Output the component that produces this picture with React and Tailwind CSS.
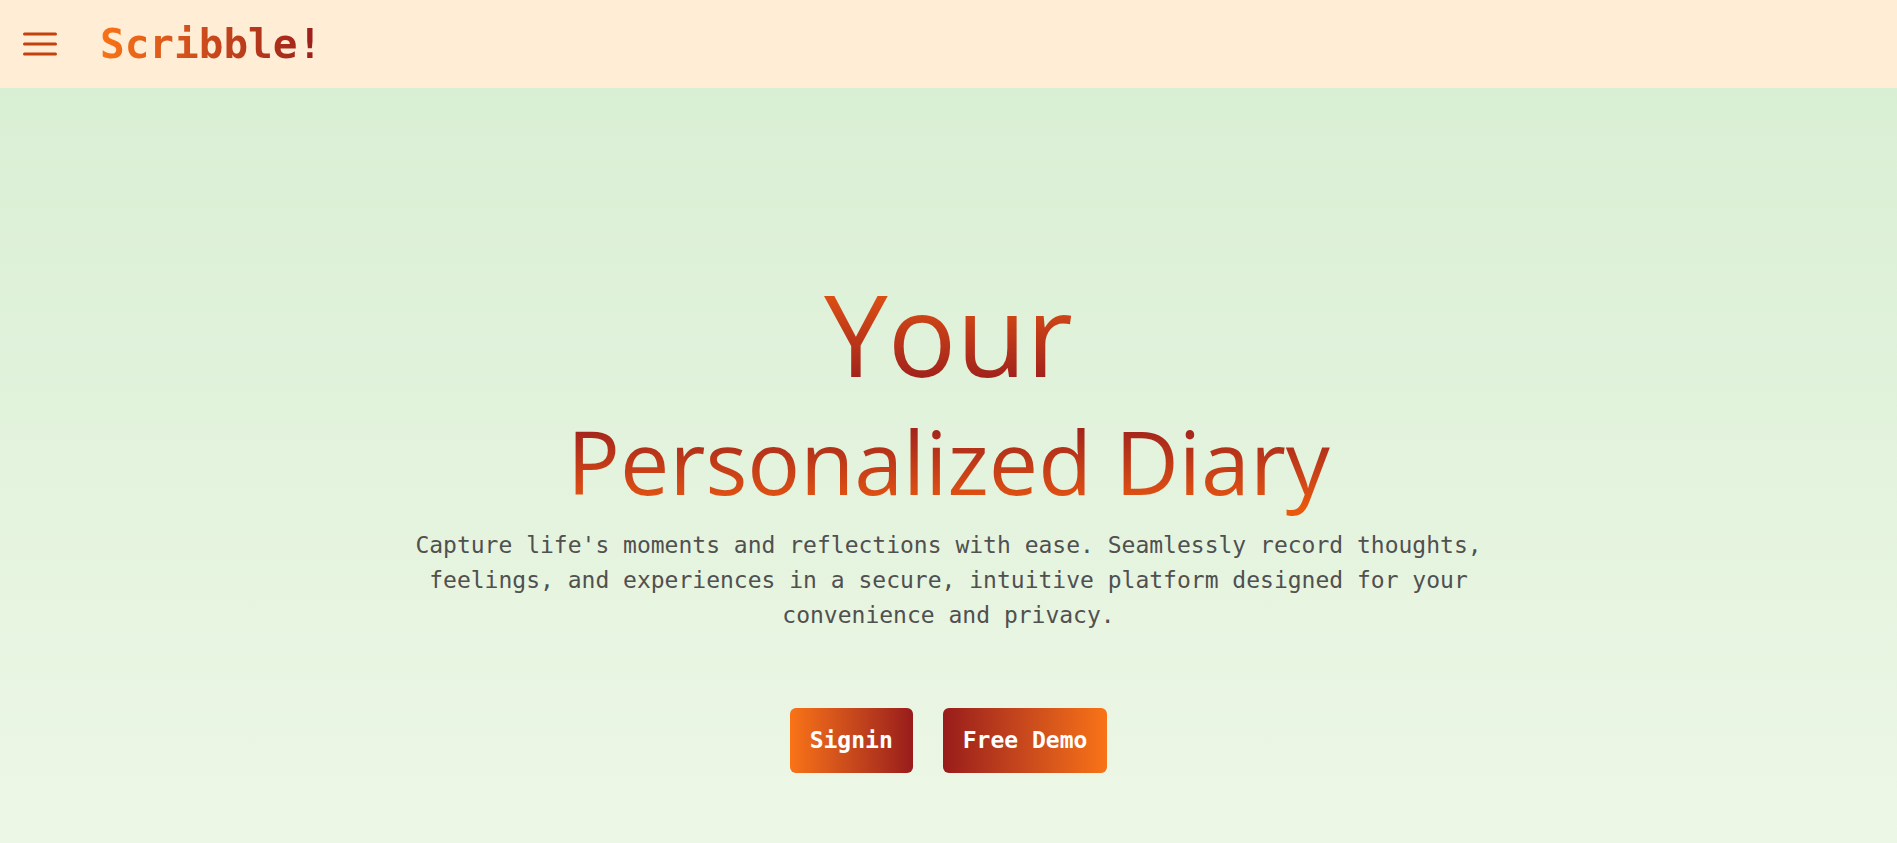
export default function App() {
  return (
    <div className="min-h-screen flex flex-col">
      <header className="h-[88px] bg-[#ffedd5] flex items-center pl-[23px] shrink-0">
        <svg width="34" height="24" viewBox="0 0 34 24" className="shrink-0">
          <line x1="1.5" y1="2" x2="32.5" y2="2" stroke="#c2410c" strokeWidth="3" strokeLinecap="round" />
          <line x1="1.5" y1="12" x2="32.5" y2="12" stroke="#c2410c" strokeWidth="3" strokeLinecap="round" />
          <line x1="1.5" y1="22" x2="32.5" y2="22" stroke="#c2410c" strokeWidth="3" strokeLinecap="round" />
        </svg>
        <span className="ml-[43px] font-['DejaVu_Sans_Mono','Liberation_Mono',monospace] text-[41px] leading-none font-bold bg-linear-to-r from-[#f97316] to-[#991b1b] bg-clip-text text-transparent">
          Scribble!
        </span>
      </header>
      <main className="flex-1 min-h-[755px] bg-linear-to-b from-[#d9efd4] to-[#edf7e6] flex flex-col items-center pt-[188px]">
        <h1 className="font-['Open_Sans','Noto_Sans',sans-serif] text-[114px] leading-none font-normal bg-linear-to-b from-[#ea580c] to-[#991b1b] bg-clip-text text-transparent">
          Your
        </h1>
        <h2 className="mt-[27px] pb-[20px] font-['Open_Sans','Noto_Sans',sans-serif] text-[88px] leading-none font-normal bg-linear-to-t from-[#ea580c] from-[15%] to-[#991b1b] bg-clip-text text-transparent">
          Personalized Diary
        </h2>
        <p className="mt-[3px] max-w-[1120px] font-['DejaVu_Sans_Mono','Liberation_Mono',monospace] text-center text-[23px] leading-[35px] text-[#505050]">
          Capture life's moments and reflections with ease. Seamlessly record thoughts, feelings, and experiences in a secure, intuitive platform designed for your convenience and privacy.
        </p>
        <div className="mt-[75px] flex gap-[30px]">
          <button className="px-5 py-4 rounded-md bg-linear-to-r from-[#f97316] to-[#991b1b] text-white font-bold font-['DejaVu_Sans_Mono','Liberation_Mono',monospace] text-[23px] leading-[33px]">
            Signin
          </button>
          <button className="px-5 py-4 rounded-md bg-linear-to-r from-[#991b1b] to-[#f97316] text-white font-bold font-['DejaVu_Sans_Mono','Liberation_Mono',monospace] text-[23px] leading-[33px]">
            Free Demo
          </button>
        </div>
      </main>
    </div>
  );
}
